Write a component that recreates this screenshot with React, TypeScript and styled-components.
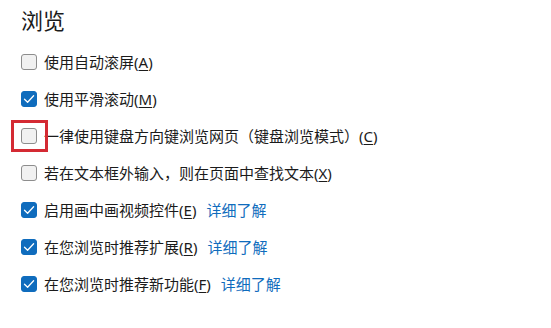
import React from "react";
import styled, { createGlobalStyle } from "styled-components";

const GlobalStyle = createGlobalStyle`
	html, body {
		margin: 0;
		padding: 0;
		background: #ffffff;
	}
	body {
		font-family: "Noto Sans", "Noto Sans CJK SC", sans-serif;
		color: #1b1b1b;
	}
`;

type Option = {
	label: string;
	key: string;
	checked: boolean;
	learnMore?: boolean;
	highlighted?: boolean;
};

const options: Option[] = [
	{ label: "使用自动滚屏", key: "A", checked: false },
	{ label: "使用平滑滚动", key: "M", checked: true },
	{
		label: "一律使用键盘方向键浏览网页（键盘浏览模式）",
		key: "C",
		checked: false,
		highlighted: true,
	},
	{ label: "若在文本框外输入，则在页面中查找文本", key: "X", checked: false },
	{ label: "启用画中画视频控件", key: "E", checked: true, learnMore: true },
	{ label: "在您浏览时推荐扩展", key: "R", checked: true, learnMore: true },
	{ label: "在您浏览时推荐新功能", key: "F", checked: true, learnMore: true },
];

const Check = ({ checked }: { checked: boolean }) => (
	<Box $checked={checked}>
		{checked && (
			<svg width="12" height="12" viewBox="0 0 12 12">
				<polyline
					points="1.5,6.2 4.6,9.2 10.6,2.8"
					fill="none"
					stroke="#ffffff"
					strokeWidth="1.3"
					strokeLinecap="round"
					strokeLinejoin="round"
				/>
			</svg>
		)}
	</Box>
);

const App = () => {
	return (
		<Page>
			<GlobalStyle />
			<Heading>浏览</Heading>
			<List>
				{options.map((o) => (
					<Row key={o.key}>
						<CheckWrap>
							<Check checked={o.checked} />
							{o.highlighted && <Highlight />}
						</CheckWrap>
						<Label>
							{o.label}(<u>{o.key}</u>)
						</Label>
						{o.learnMore && <LearnMore href="#">详细了解</LearnMore>}
					</Row>
				))}
			</List>
		</Page>
	);
};

const Page = styled.div`
	padding: 5px 0 0 21px;
	width: 551px;
	height: 328px;
	box-sizing: border-box;
	overflow: hidden;
`;

const Heading = styled.h2`
	margin: 0 0 8px;
	font-size: 22px;
	line-height: 30px;
	font-weight: 400;
	color: #1b1b1b;
`;

const List = styled.div`
	display: flex;
	flex-direction: column;
`;

const Row = styled.div`
	display: flex;
	align-items: center;
	height: 37px;
	gap: 7px;
	font-size: 15px;
	line-height: 20px;
`;

const CheckWrap = styled.div`
	position: relative;
	display: flex;
`;

const Box = styled.span<{ $checked: boolean }>`
	width: 16px;
	height: 16px;
	box-sizing: border-box;
	border-radius: 3px;
	display: flex;
	align-items: center;
	justify-content: center;
	background: ${(p) => (p.$checked ? "#0f6cbd" : "#f1f1f1")};
	border: 1px solid ${(p) => (p.$checked ? "#0f6cbd" : "#8d8d8d")};
`;

const Highlight = styled.span`
	position: absolute;
	left: -10px;
	top: -8px;
	width: 37px;
	height: 32px;
	box-sizing: border-box;
	border: 3px solid #d42a33;
	pointer-events: none;
`;

const Label = styled.span`
	color: #1b1b1b;
	white-space: nowrap;

	u {
		text-underline-offset: 2px;
	}
`;

const LearnMore = styled.a`
	margin-left: 3px;
	color: #0f6cbd;
	text-decoration: none;
	white-space: nowrap;
`;

export default App;
